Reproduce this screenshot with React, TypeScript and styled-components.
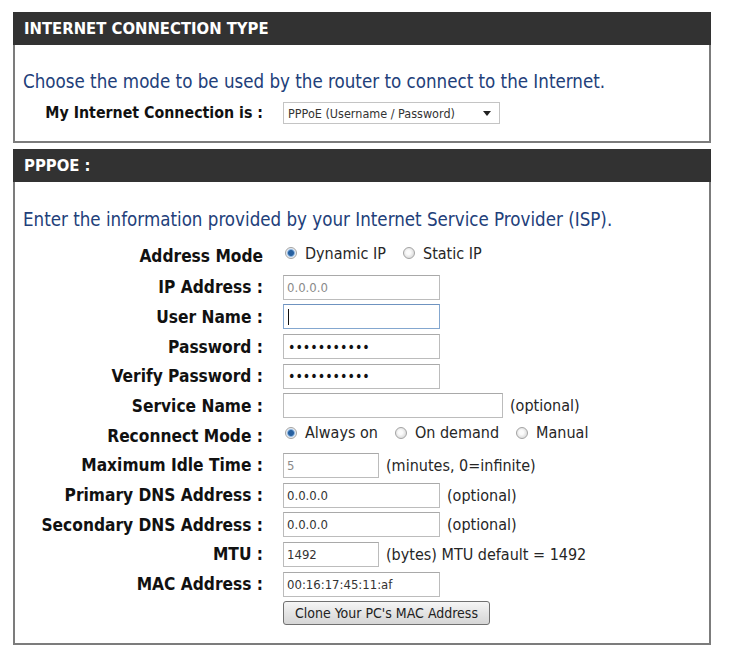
import React from "react";
import styled, { createGlobalStyle } from "styled-components";

const GlobalStyle = createGlobalStyle`
  body {
    margin: 0;
    background: #fff;
    font-family: "DejaVu Sans", Verdana, sans-serif;
  }
`;

const Condensed = `"DejaVu Sans Condensed", "DejaVu Sans", Verdana, sans-serif`;

const Page = styled.div`
  width: 698px;
  padding: 12px 20px 0 13px;
`;

const Panel = styled.section`
  & + & {
    margin-top: 6px;
  }
`;

const PanelHeader = styled.h2`
  margin: 0;
  height: 33px;
  padding-left: 11px;
  background: #323232;
  color: #fff;
  font: bold 16.5px/33px ${Condensed};
  font-stretch: condensed;
  text-transform: uppercase;
`;

const PanelBody = styled.div<{ $top: number; $bottom: number }>`
  border: 2px solid #7c7c7c;
  border-top: none;
  padding: ${(p) => p.$top}px 12px ${(p) => p.$bottom}px 8px;
`;

const Intro = styled.p`
  margin: 0;
  color: #22407a;
  font-family: ${Condensed};
  font-stretch: condensed;
  font-size: 18.6px;
  line-height: 20px;
`;

const Form = styled.div<{ $top: number }>`
  display: grid;
  grid-template-columns: 240px 1fr;
  column-gap: 20px;
  row-gap: 4.7px;
  align-items: center;
  margin-top: ${(p) => p.$top}px;
`;

const Label = styled.div<{ $size?: number }>`
  text-align: right;
  white-space: nowrap;
  font-family: ${Condensed};
  font-stretch: condensed;
  font-weight: bold;
  font-size: ${(p) => p.$size ?? 17.2}px;
  line-height: 20px;
  color: #111;
`;

const Control = styled.div<{ $h?: number }>`
  display: flex;
  align-items: center;
  min-height: ${(p) => p.$h ?? 25}px;
`;

const Field = styled.div<{ $w: number; $muted?: boolean; $focus?: boolean }>`
  box-sizing: border-box;
  width: ${(p) => p.$w}px;
  height: 25px;
  padding: 0 3px;
  display: flex;
  align-items: center;
  border: 1px solid ${(p) => (p.$focus ? "#84a7cf" : "#bcbcbc")};
  border-top-color: ${(p) => (p.$focus ? "#6f93c0" : "#a9a9a9")};
  background: #fff;
  font-family: ${Condensed};
  font-stretch: condensed;
  font-size: 13px;
  color: ${(p) => (p.$muted ? "#8a8a8a" : "#333")};
  white-space: nowrap;
`;

const Dots = styled.span`
  font-size: 14px;
  color: #111;
  padding-left: 1px;
`;

const Caret = styled.span`
  width: 1px;
  height: 16px;
  margin-left: 1px;
  background: #111;
`;

const Suffix = styled.span`
  margin-left: 7px;
  font-family: ${Condensed};
  font-stretch: condensed;
  font-size: 16px;
  color: #262626;
  white-space: nowrap;
`;

const Select = styled.div`
  box-sizing: border-box;
  width: 217px;
  height: 22px;
  padding: 0 8px 0 4px;
  display: flex;
  align-items: center;
  justify-content: space-between;
  border: 1px solid #c4c4c4;
  background: #fff;
  font-family: ${Condensed};
  font-stretch: condensed;
  font-size: 12.5px;
  color: #333;
  white-space: nowrap;
`;

const RadioGroup = styled.div`
  display: flex;
  align-items: center;
  padding: 0 0 6px 2px;
  font-family: ${Condensed};
  font-stretch: condensed;
  font-size: 16px;
  color: #262626;
`;

const RadioDot = styled.span<{ $checked?: boolean }>`
  box-sizing: border-box;
  width: 12px;
  height: 12px;
  margin-right: 8px;
  border-radius: 50%;
  border: 1px solid #a3a3a3;
  background: ${(p) =>
    p.$checked
      ? "radial-gradient(circle, #27609f 0 2.5px, #6d9fd4 3.2px, #d9e6f4 4.2px, #f2f2f2 5px)"
      : "radial-gradient(circle at 45% 45%, #fbfbfb 0 2px, #e2e2e2 5px)"};
`;

const RadioText = styled.span`
  margin-right: 17px;
  white-space: nowrap;
`;

const CloneButton = styled.button`
  box-sizing: border-box;
  width: 207px;
  height: 24px;
  border: 1px solid #707070;
  border-radius: 3px;
  background: linear-gradient(#f6f6f6, #e4e4e4 50%, #d6d6d6);
  font-family: ${Condensed};
  font-stretch: condensed;
  font-size: 14px;
  color: #222;
  padding: 0;
`;

const Radio = ({ checked, children }: { checked?: boolean; children: string }) => (
  <>
    <RadioDot $checked={checked} />
    <RadioText>{children}</RadioText>
  </>
);

const Arrow = () => (
  <svg width="8" height="5" viewBox="0 0 8 5">
    <path d="M0 0h8L4 5z" fill="#222" />
  </svg>
);

const PASSWORD = "•••••••••••";

export default function App() {
  return (
    <Page>
      <GlobalStyle />
      <Panel>
        <PanelHeader>Internet Connection Type</PanelHeader>
        <PanelBody $top={27} $bottom={17}>
          <Intro>Choose the mode to be used by the router to connect to the Internet.</Intro>
          <Form $top={10}>
            <Label $size={15.8}>My Internet Connection is :</Label>
            <Control $h={22}>
              <Select>
                PPPoE (Username / Password)
                <Arrow />
              </Select>
            </Control>
          </Form>
        </PanelBody>
      </Panel>

      <Panel>
        <PanelHeader>PPPOE :</PanelHeader>
        <PanelBody $top={28} $bottom={18}>
          <Intro>Enter the information provided by your Internet Service Provider (ISP).</Intro>
          <Form $top={12}>
            <Label>Address Mode</Label>
            <Control $h={28}>
              <RadioGroup>
                <Radio checked>Dynamic IP</Radio>
                <Radio>Static IP</Radio>
              </RadioGroup>
            </Control>

            <Label>IP Address :</Label>
            <Control>
              <Field $w={157} $muted>0.0.0.0</Field>
            </Control>

            <Label>User Name :</Label>
            <Control>
              <Field $w={157} $focus>
                <Caret />
              </Field>
            </Control>

            <Label>Password :</Label>
            <Control>
              <Field $w={157}>
                <Dots>{PASSWORD}</Dots>
              </Field>
            </Control>

            <Label>Verify Password :</Label>
            <Control>
              <Field $w={157}>
                <Dots>{PASSWORD}</Dots>
              </Field>
            </Control>

            <Label>Service Name :</Label>
            <Control>
              <Field $w={220} />
              <Suffix>(optional)</Suffix>
            </Control>

            <Label>Reconnect Mode :</Label>
            <Control>
              <RadioGroup>
                <Radio checked>Always on</Radio>
                <Radio>On demand</Radio>
                <Radio>Manual</Radio>
              </RadioGroup>
            </Control>

            <Label>Maximum Idle Time :</Label>
            <Control>
              <Field $w={96} $muted>5</Field>
              <Suffix>(minutes, 0=infinite)</Suffix>
            </Control>

            <Label>Primary DNS Address :</Label>
            <Control>
              <Field $w={157}>0.0.0.0</Field>
              <Suffix>(optional)</Suffix>
            </Control>

            <Label>Secondary DNS Address :</Label>
            <Control>
              <Field $w={157}>0.0.0.0</Field>
              <Suffix>(optional)</Suffix>
            </Control>

            <Label>MTU :</Label>
            <Control>
              <Field $w={96}>1492</Field>
              <Suffix>(bytes) MTU default = 1492</Suffix>
            </Control>

            <Label>MAC Address :</Label>
            <Control>
              <Field $w={157}>00:16:17:45:11:af</Field>
            </Control>

            <span />
            <Control $h={24}>
              <CloneButton type="button">Clone Your PC's MAC Address</CloneButton>
            </Control>
          </Form>
        </PanelBody>
      </Panel>
    </Page>
  );
}
